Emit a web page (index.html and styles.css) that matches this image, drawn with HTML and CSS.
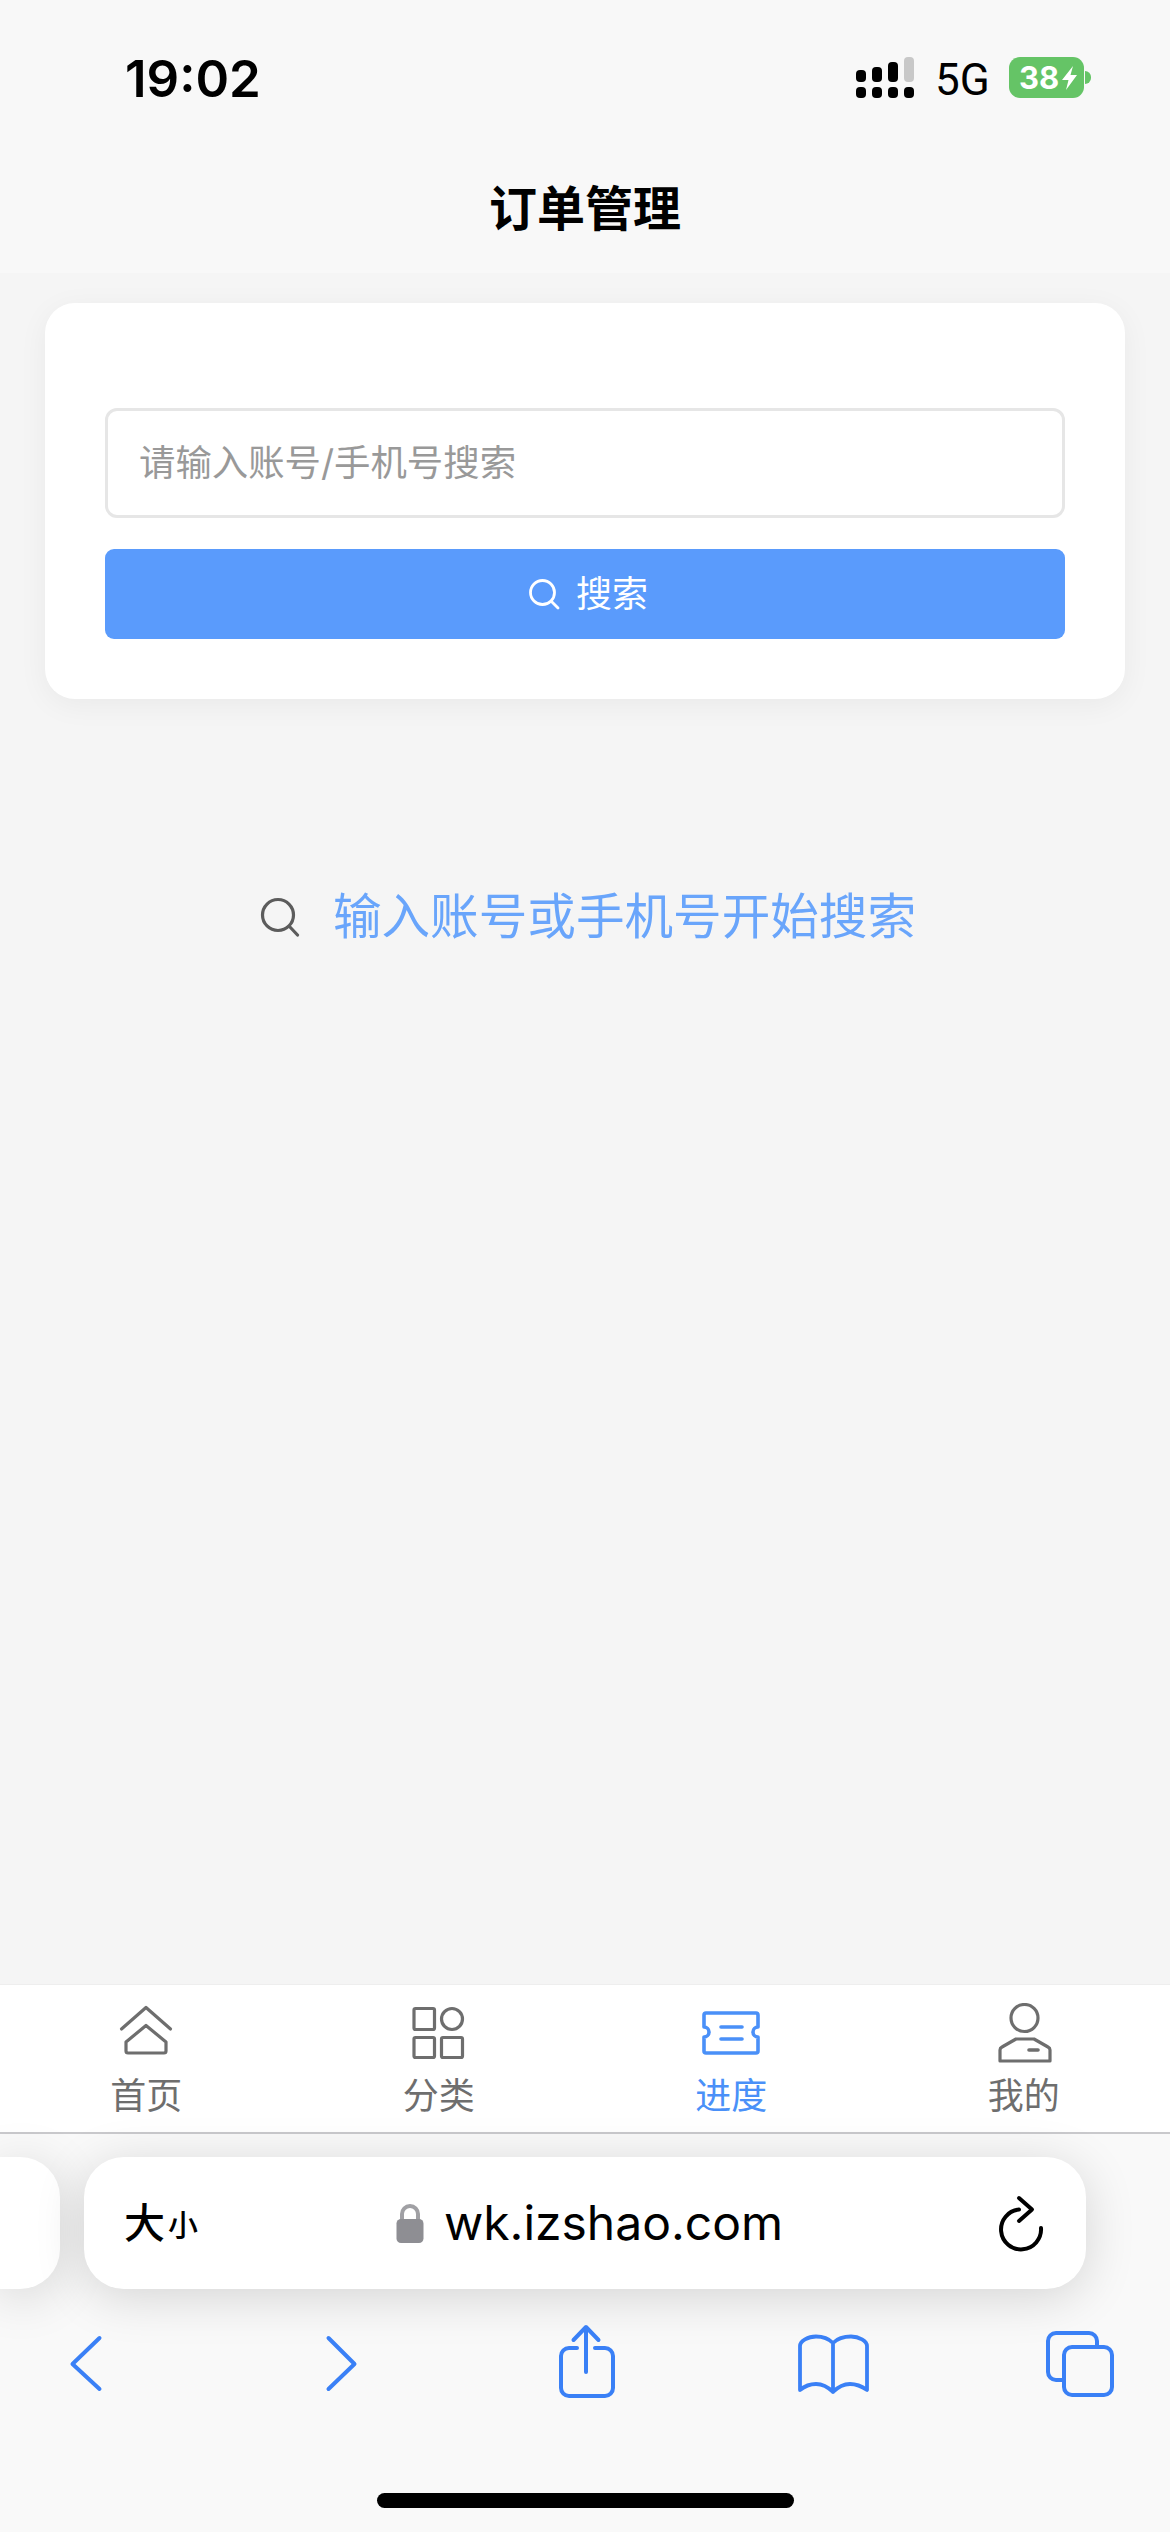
FILE: index.html
```html
<!DOCTYPE html>
<html lang="zh-CN">
<head>
<meta charset="utf-8">
<title>订单管理</title>
<link rel="stylesheet" href="styles.css">
</head>
<body>
<div class="status">
  <span class="time">19:02</span>
  <div class="status-right">
    <svg class="signal" width="58" height="41" viewBox="0 0 58 41">
      <rect x="0" y="13" width="10" height="12" rx="4" fill="#000"/>
      <rect x="16" y="10" width="10" height="15" rx="4" fill="#000"/>
      <rect x="32" y="5" width="10" height="20" rx="4" fill="#000"/>
      <rect x="48" y="0" width="10" height="25" rx="4" fill="#c8c8c8"/>
      <rect x="0" y="30" width="10" height="11" rx="4" fill="#000"/>
      <rect x="16" y="30" width="10" height="11" rx="4" fill="#000"/>
      <rect x="32" y="30" width="10" height="11" rx="4" fill="#000"/>
      <rect x="48" y="30" width="10" height="11" rx="4" fill="#000"/>
    </svg>
    <span class="net">5G</span>
    <div class="battery">
      <span class="battery-num">38</span>
      <svg width="15" height="24" viewBox="0 0 15 24"><path d="M11 0 L0 14 H6.500 L4 24 L15 9 H8.500 Z" fill="#fff"/></svg>
      <span class="battery-nub"></span>
    </div>
  </div>
</div>
<header class="title-bar"><h1 class="title">订单管理</h1></header>
<main class="main">
  <section class="card">
    <input class="search-input" type="text" placeholder="请输入账号/手机号搜索">
    <button class="search-btn" type="button">
      <svg width="32" height="32" viewBox="0 0 32 32" fill="none" stroke="#fff" stroke-width="2.800" stroke-linecap="round"><circle cx="14.500" cy="14.500" r="12"/><path d="M23.500 23.500 L30 30"/></svg>
      <span class="search-btn-text">搜索</span>
    </button>
  </section>
  <div class="empty">
    <svg width="40" height="40" viewBox="0 0 40 40" fill="none" stroke="#5c5c5c" stroke-width="3.200" stroke-linecap="round"><circle cx="18" cy="18" r="15.500"/><path d="M29.500 29.500 L37.500 38"/></svg>
    <span class="empty-text">输入账号或手机号开始搜索</span>
  </div>
</main>
<nav class="tabs">
  <div class="tab">
    <svg class="tab-icon" width="60" height="60" viewBox="0 0 60 60" fill="none" stroke="#6e6e6e" stroke-width="3.200" stroke-linecap="round" stroke-linejoin="round"><path d="M5.500 26 L30 4.500 L54.500 26"/><path d="M10 39 L30 22.500 L50 39 V48 a2 2 0 0 1 -2 2 H12 a2 2 0 0 1 -2 -2 Z"/></svg>
    <span class="tab-label">首页</span>
  </div>
  <div class="tab">
    <svg class="tab-icon" width="60" height="60" viewBox="0 0 60 60" fill="none" stroke="#6e6e6e" stroke-width="3.200"><rect x="5" y="5.500" width="20.500" height="21" rx="1.500"/><circle cx="43" cy="16" r="10.500"/><rect x="5" y="34.500" width="20.500" height="20" rx="1.500"/><rect x="32.500" y="34.500" width="21" height="20" rx="1.500"/></svg>
    <span class="tab-label">分类</span>
  </div>
  <div class="tab tab-active">
    <svg class="tab-icon" width="60" height="60" viewBox="0 0 60 60" fill="none" stroke="#4a90f8" stroke-width="3.600" stroke-linecap="round" stroke-linejoin="round"><path d="M5 10 H55 a2 2 0 0 1 2 2 V24 a5 5 0 0 0 0 10 V48 a2 2 0 0 1 -2 2 H5 a2 2 0 0 1 -2 -2 V34 a5 5 0 0 0 0 -10 V12 a2 2 0 0 1 2 -2 Z"/><path d="M20 24 H41"/><path d="M20 36 H41"/></svg>
    <span class="tab-label">进度</span>
  </div>
  <div class="tab">
    <svg class="tab-icon" width="60" height="60" viewBox="0 0 60 60" fill="none" stroke="#6e6e6e" stroke-width="3.200" stroke-linejoin="round"><circle cx="30.500" cy="15" r="13.500"/><path d="M6 58 V47 Q6 45 8 44 L22 36 H40 L54 44 Q56 45 56 47 V58 Z"/><path d="M35 47 H44" stroke-width="3.600" stroke-linecap="round"/></svg>
    <span class="tab-label">我的</span>
  </div>
</nav>
<div class="chrome">
  <div class="strip">
    <div class="peek"></div>
    <div class="address">
      <span class="aa"><span class="aa-big">大</span><span class="aa-small">小</span></span>
      <div class="url-group">
        <svg width="28" height="40" viewBox="0 0 28 40"><path d="M6 18 V11 a8 8 0 0 1 16 0 V18" fill="none" stroke="#a0a0a4" stroke-width="4"/><rect x="0.500" y="16" width="27" height="24" rx="4.500" fill="#8e8e93"/></svg>
        <span class="url">wk.izshao.com</span>
      </div>
      <svg width="60" height="60" viewBox="0 0 60 60" fill="none" stroke="#000" stroke-width="4" stroke-linecap="round" stroke-linejoin="round"><path d="M51 35 A20 20 0 1 1 29 16.500"/><path d="M29 5 L42 16.500 L29 28"/></svg>
    </div>
  </div>
  <div class="toolbar">
    <svg width="80" height="80" viewBox="0 0 80 80" fill="none" stroke="#3a80f6" stroke-width="4" stroke-linecap="round" stroke-linejoin="round"><path d="M52.500 16 L25.500 42 L52.500 67"/></svg>
    <svg width="80" height="80" viewBox="0 0 80 80" fill="none" stroke="#3a80f6" stroke-width="4" stroke-linecap="round" stroke-linejoin="round"><path d="M33.500 16 L59.500 42 L33.500 67"/></svg>
    <svg width="80" height="80" viewBox="0 0 80 80" fill="none" stroke="#3a80f6" stroke-width="4" stroke-linecap="round" stroke-linejoin="round"><path d="M33 26 H25 a8 8 0 0 0 -8 8 V66 a8 8 0 0 0 8 8 H61 a8 8 0 0 0 8 -8 V34 a8 8 0 0 0 -8 -8 H51"/><path d="M42 50 V6"/><path d="M29.500 18 L42 5 L54.500 18"/></svg>
    <svg width="80" height="80" viewBox="0 0 80 80" fill="none" stroke="#3a80f6" stroke-width="3.800" stroke-linecap="round" stroke-linejoin="round"><path d="M41 21 C36 16 29 14.500 24 14.500 C16 14.500 8 19 8 24 V68 C14 63 19 62 24 62 C30 62 36 65 41 70 C46 65 52 62 58 62 C63 62 68 63 75 68 V24 C75 19 67 14.500 59 14.500 C54 14.500 46 16 41 21 V70"/></svg>
    <svg width="80" height="80" viewBox="0 0 80 80" fill="none" stroke="#3a80f6" stroke-width="4" stroke-linecap="round" stroke-linejoin="round"><path d="M24 58 H16 a8 8 0 0 1 -8 -8 V19 a8 8 0 0 1 8 -8 H49 a8 8 0 0 1 8 8 V25"/><rect x="24" y="25" width="48" height="48" rx="8"/></svg>
  </div>
  <div class="home-bar"></div>
</div>
</body>
</html>
```
FILE: styles.css
```css
* { box-sizing: border-box; }
html, body { margin: 0; padding: 0; }
body {
  width: 1170px;
  height: 2532px;
  display: flex;
  flex-direction: column;
  overflow: hidden;
  background: #f5f5f5;
  font-family: Inter, "Noto Sans CJK SC", sans-serif;
}
.status {
  height: 140px;
  flex: none;
  background: #f8f8f8;
  display: flex;
  justify-content: space-between;
  padding: 52px 86px 0 125px;
}
.time {
  font-size: 51px;
  font-weight: 600;
  line-height: 54px;
  height: 54px;
  color: #000;
}
.status-right {
  display: flex;
  align-items: flex-start;
  margin-top: -1px;
  padding-top: 6px;
}
.signal { margin-right: 21px; }
.net {
  font-family: Roboto, sans-serif;
  font-size: 44px;
  line-height: 41px;
  padding-top: 3px;
  color: #000;
  width: 52px;
  white-space: nowrap;
  margin-right: 22px;
}
.battery {
  position: relative;
  width: 75px;
  height: 41px;
  background: #65c466;
  border-radius: 11px;
  display: flex;
  align-items: center;
  padding-left: 10px;
  gap: 3px;
}
.battery-num {
  font-size: 31px;
  font-weight: 700;
  line-height: 41px;
  color: #fff;
}
.battery-nub {
  position: absolute;
  right: -7px;
  top: 14px;
  width: 6px;
  height: 13px;
  background: #65c466;
  border-radius: 0 7px 7px 0;
}
.title-bar {
  height: 133px;
  flex: none;
  background: #f8f8f8;
  padding-top: 39px;
  display: flex;
  justify-content: center;
}
.title {
  margin: 0;
  font-size: 48px;
  font-weight: 700;
  line-height: 60px;
  height: 60px;
  color: #000;
}
.main {
  flex: 1;
  padding: 30px 45px 0;
}
.card {
  background: #fff;
  border-radius: 30px;
  padding: 105px 60px 60px;
  box-shadow: 0 6px 30px rgba(0, 0, 0, 0.05);
  display: flex;
  flex-direction: column;
  gap: 31px;
}
.search-input {
  display: block;
  width: 100%;
  height: 110px;
  border: 3px solid #e6e6e6;
  border-radius: 12px;
  padding: 0 31px;
  font-family: inherit;
  font-size: 36.4px;
  color: #333;
  background: #fff;
  outline: none;
}
.search-input::placeholder { color: #999; opacity: 1; }
.search-btn {
  height: 90px;
  border: 0;
  border-radius: 9px;
  background: #5a9bfc;
  color: #fff;
  font-family: inherit;
  font-size: 36px;
  display: flex;
  align-items: center;
  justify-content: center;
  gap: 16px;
  padding: 0 0 0 6px;
}
.search-btn-text { margin-top: -6px; }
.empty {
  margin-top: 186px;
  display: flex;
  align-items: center;
  justify-content: center;
  gap: 33px;
  height: 64px;
  padding-left: 6px;
}
.empty-text {
  font-size: 48.6px;
  line-height: 64px;
  color: #69a5fb;
}
.tabs {
  flex: none;
  height: 150px;
  background: #fff;
  border-top: 1px solid #eee;
  border-bottom: 2px solid #c9c9cc;
  display: flex;
}
.tab {
  flex: 1;
  display: flex;
  flex-direction: column;
  align-items: center;
  padding-top: 18px;
}
.tab-icon { display: block; flex: none; }
.tab-label {
  margin-top: 13px;
  font-size: 36px;
  line-height: 40px;
  color: #6e6e6e;
}
.tab-active .tab-label { color: #4a90f8; }
.chrome {
  flex: none;
  height: 398px;
  background: #f9f9f9;
  padding-top: 23px;
  display: flex;
  flex-direction: column;
  align-items: stretch;
}
.strip {
  height: 132px;
  flex: none;
  display: flex;
  gap: 24px;
  padding-right: 84px;
}
.peek {
  width: 60px;
  flex: none;
  background: #fff;
  border-radius: 0 40px 40px 0;
  box-shadow: 0 8px 50px rgba(0, 0, 0, 0.15);
}
.address {
  flex: 1;
  background: #fff;
  border-radius: 40px;
  box-shadow: 0 8px 50px rgba(0, 0, 0, 0.15);
  display: flex;
  align-items: center;
  padding: 0 36px 0 40px;
}
.aa {
  display: flex;
  align-items: flex-end;
  gap: 3px;
  color: #000;
  font-weight: 500;
  width: 72px;
  white-space: nowrap;
}
.aa-big { font-size: 41px; line-height: 44px; }
.aa-small { font-size: 30px; line-height: 40px; }
.url-group {
  flex: 1;
  display: flex;
  align-items: center;
  justify-content: center;
  gap: 20px;
  padding-right: 7px;
}
.url {
  font-size: 48px;
  line-height: 56px;
  color: #000;
  white-space: nowrap;
}
.toolbar {
  flex: none;
  margin-top: 33px;
  height: 80px;
  padding: 0 50px 0 47px;
  display: flex;
  justify-content: space-between;
}
.home-bar {
  width: 417px;
  height: 15px;
  margin: 91px auto 0;
  background: #000;
  border-radius: 8px;
}
```
